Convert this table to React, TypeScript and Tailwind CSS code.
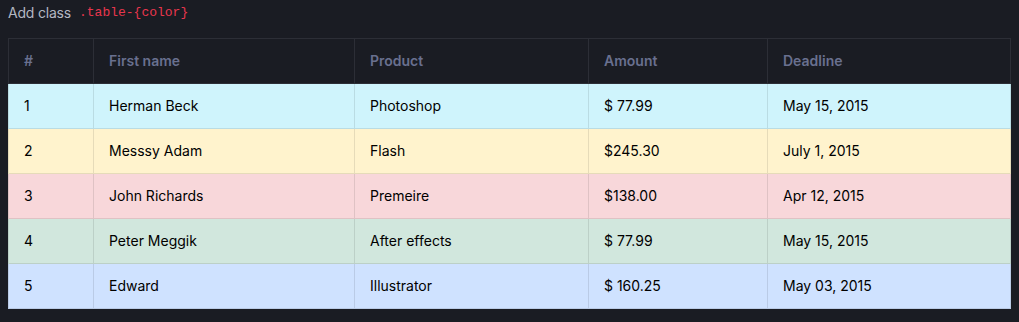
import React from 'react';

const rows = [
  { id: 1, name: 'Herman Beck', product: 'Photoshop', amount: '$ 77.99', deadline: 'May 15, 2015', bg: 'bg-[#cff4fc]', border: 'border-[#badce3]' },
  { id: 2, name: 'Messsy Adam', product: 'Flash', amount: '$245.30', deadline: 'July 1, 2015', bg: 'bg-[#fff3cd]', border: 'border-[#e6dbb9]' },
  { id: 3, name: 'John Richards', product: 'Premeire', amount: '$138.00', deadline: 'Apr 12, 2015', bg: 'bg-[#f8d7da]', border: 'border-[#dfc2c4]' },
  { id: 4, name: 'Peter Meggik', product: 'After effects', amount: '$ 77.99', deadline: 'May 15, 2015', bg: 'bg-[#d1e7dd]', border: 'border-[#bcd0c7]' },
  { id: 5, name: 'Edward', product: 'Illustrator', amount: '$ 160.25', deadline: 'May 03, 2015', bg: 'bg-[#cfe2ff]', border: 'border-[#bacbe6]' },
];

const headers = ['#', 'First name', 'Product', 'Amount', 'Deadline'];

export default function App() {
  return (
    <div className="min-h-[322px] bg-[#1a1c23] px-2 pt-[3px] font-['Inter','Roboto',sans-serif] text-sm">
      <div className="flex items-center h-[20px]">
        <span className="text-[#b3b7c2] tracking-[-0.2px]">Add class</span>
        <code className="ml-[8px] font-['Liberation_Mono',monospace] text-[13px] text-[#e8364d]">.table-{'{color}'}</code>
      </div>

      <table className="mt-[15px] w-[1002px] table-fixed border-collapse border border-[#2c2e36]">
        <colgroup>
          <col className="w-[85px]" />
          <col className="w-[261px]" />
          <col className="w-[234px]" />
          <col className="w-[179px]" />
          <col className="w-[243px]" />
        </colgroup>
        <thead>
          <tr className="h-[45px]">
            {headers.map((h) => (
              <th key={h} className="border border-[#2c2e36] pl-[15px] pr-4 pb-[1px] text-left font-semibold text-[#69708f]">
                {h}
              </th>
            ))}
          </tr>
        </thead>
        <tbody>
          {rows.map((r) => (
            <tr key={r.id} className={`h-[45px] ${r.bg} text-black`}>
              {[r.id, r.name, r.product, r.amount, r.deadline].map((v, i) => (
                <td key={i} className={`border ${r.border} pl-[15px] pr-4 pb-[1px]`}>
                  {v}
                </td>
              ))}
            </tr>
          ))}
        </tbody>
      </table>
    </div>
  );
}
